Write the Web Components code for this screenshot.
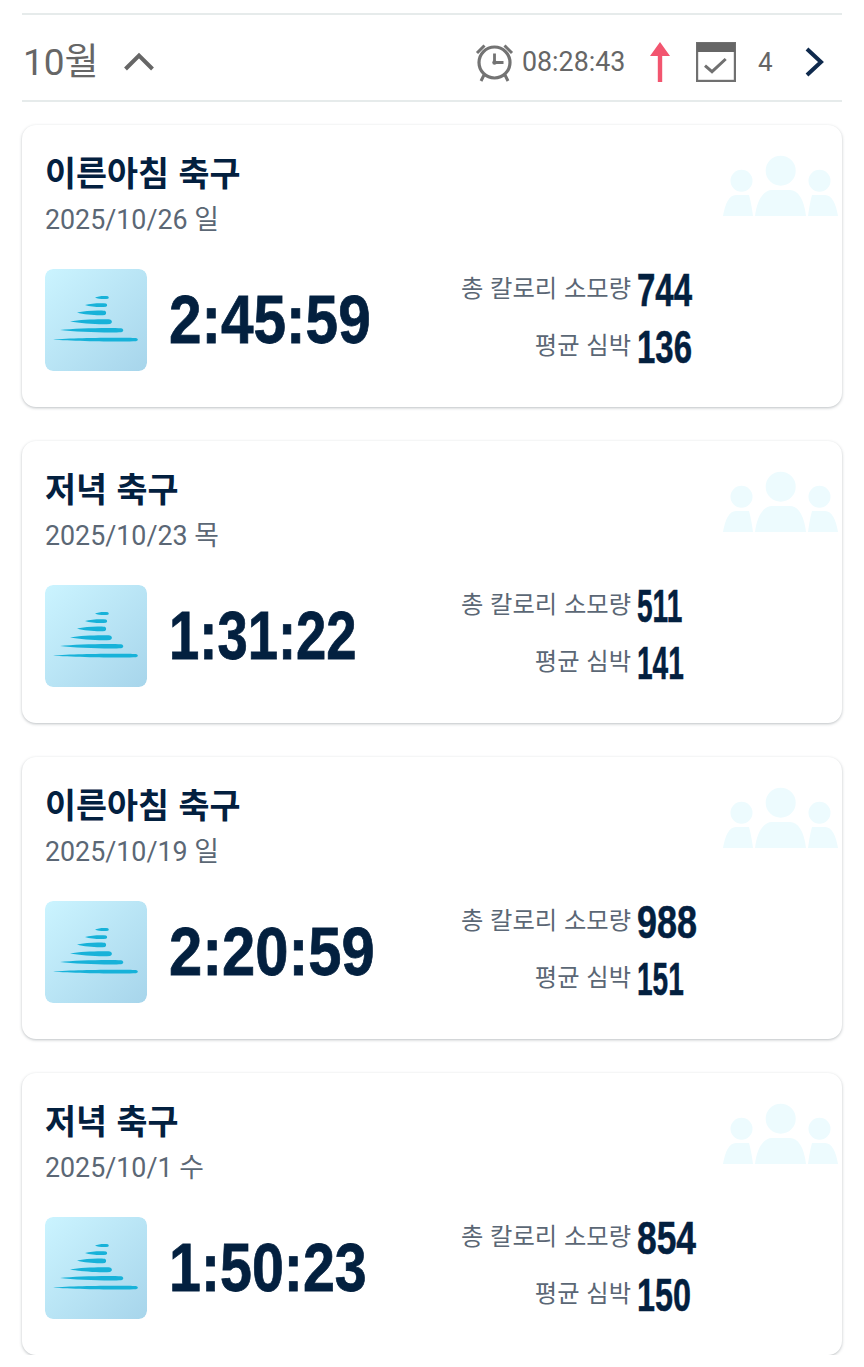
<!DOCTYPE html>
<html lang="ko">
<head>
<meta charset="utf-8">
<title>10월</title>
<style>
    html, body {
        margin: 0;
        background: #ffffff;
    }

    body {
        font-family: Roboto, "Noto Sans CJK KR", sans-serif;
    }
</style>
</head>
<body>
<run-month month="10월" clock="08:28:43" count="4">
    <workout-card title="이른아침 축구" date="2025/10/26 일" time="2:45:59" time-width="201" calories="744" calories-width="54" heart="136" heart-width="54"></workout-card>
    <workout-card title="저녁 축구" date="2025/10/23 목" time="1:31:22" time-width="187" calories="511" calories-width="46" heart="141" heart-width="46"></workout-card>
    <workout-card title="이른아침 축구" date="2025/10/19 일" time="2:20:59" time-width="205" calories="988" calories-width="59" heart="151" heart-width="46"></workout-card>
    <workout-card title="저녁 축구" date="2025/10/1 수" time="1:50:23" time-width="197" calories="854" calories-width="58" heart="150" heart-width="53"></workout-card>
</run-month>

<script>
class RunMonth extends HTMLElement {
    constructor() {
        super();
        this.attachShadow({ mode: 'open' });
        this.shadowRoot.innerHTML = `
            <style>
                :host {
                    display: block;
                    padding: 13px 22px 0 22px;
                    color: #666666;
                }

                header {
                    height: 76px;
                    padding-top: 9px;
                    border-top: 2px solid #e6ebeb;
                    border-bottom: 2px solid #e6ebeb;
                    display: flex;
                    align-items: center;
                }

                .month {
                    font: 400 37px Roboto, "Noto Sans CJK KR", sans-serif;
                    width: 101px;
                    line-height: 1;
                    margin-left: 1px;
                    margin-right: -1px;
                }

                .spacer {
                    flex: 1;
                }

                .clock-time {
                    font: 400 26.800px Roboto, sans-serif;
                    margin-left: 7px;
                    width: 112px;
                }

                .count {
                    font: 400 26px Roboto, sans-serif;
                    margin-left: 22px;
                    width: 16px;
                }

                svg {
                    display: block;
                    flex: none;
                }

                .cards {
                    display: flex;
                    flex-direction: column;
                    gap: 34px;
                    padding-top: 23px;
                }
            </style>
            <header>
                <span class="month"></span>
                <svg width="32" height="22" viewBox="0 0 32 22"><path d="M2.500 18 16 4.500 29.500 18" fill="none" stroke="#666" stroke-width="4"/></svg>
                <span class="spacer"></span>
                <svg width="40" height="40" viewBox="0 0 40 40" fill="none" stroke="#737373">
                    <circle cx="19.500" cy="20.500" r="15.500" stroke-width="3.200"/>
                    <path d="M2 11 9.500 3.500M37 11 29.500 3.500M9 33l-3 6M30 33l3 6" stroke-width="3"/>
                    <path d="M19.500 11.500v9h9" stroke-width="2.800"/>
                    <circle cx="19.500" cy="20.500" r="2.200" fill="#737373" stroke="none"/>
                </svg>
                <span class="clock-time"></span>
                <svg style="margin-left:13px" width="26" height="42" viewBox="0 0 26 42"><path d="M13 1 23 15H15.200V41H10.800V15H3Z" fill="#f2556f"/></svg>
                <svg style="margin-left:23px" width="40" height="40" viewBox="0 0 40 40">
                    <rect x="1" y="1" width="38" height="38" fill="none" stroke="#707070" stroke-width="2.400"/>
                    <rect x="1" y="1" width="38" height="9" fill="#666"/>
                    <path d="M9 23.700l7 6L29.700 17" fill="none" stroke="#707070" stroke-width="3"/>
                </svg>
                <span class="count"></span>
                <svg style="margin:0 18px 0 30px" width="20" height="30" viewBox="0 0 20 30"><path d="M3 2 17 15 3 28" fill="none" stroke="#0f2a4d" stroke-width="4"/></svg>
            </header>
            <div class="cards"><slot></slot></div>
        `;
        this.shadowRoot.querySelector('.month').textContent = this.getAttribute('month');
        this.shadowRoot.querySelector('.clock-time').textContent = this.getAttribute('clock');
        this.shadowRoot.querySelector('.count').textContent = this.getAttribute('count');
    }
}

class WorkoutCard extends HTMLElement {
    constructor() {
        super();
        this.attachShadow({ mode: 'open' });
        this.shadowRoot.innerHTML = `
            <style>
                :host {
                    display: block;
                    position: relative;
                    height: 282px;
                    box-sizing: border-box;
                    padding: 24px 23px 0 23px;
                    border-radius: 14px;
                    background: #ffffff;
                    box-shadow: 0 1px 3px rgba(60,70,80,0.34);
                    color: #03203f;
                }

                .crowd {
                    position: absolute;
                    right: 2px;
                    top: 29px;
                }

                h2 {
                    margin: 0;
                    font: 700 33.700px/46px "Noto Sans CJK KR", sans-serif;
                }

                .date {
                    font: 400 26.800px/36px Roboto, "Noto Sans CJK KR", sans-serif;
                    color: #5b6775;
                    margin-top: 7px;
                }

                .main {
                    display: flex;
                    align-items: center;
                    margin-top: 31px;
                }

                .thumb {
                    flex: none;
                    width: 102px;
                    height: 102px;
                    border-radius: 8px;
                    display: block;
                }

                .time {
                    flex: none;
                    width: 270px;
                    margin-left: 22px;
                    font: 700 69px/102px "Liberation Sans Narrow", "Liberation Sans", sans-serif;
                    -webkit-text-stroke: 0.8px currentColor;
                    transform-origin: left center;
                    white-space: nowrap;
                }

                .stats {
                    display: grid;
                    grid-template-columns: 192px auto;
                    column-gap: 6px;
                    row-gap: 11px;
                    align-items: center;
                    margin-top: -3px;
                }

                .label {
                    font: 400 24.300px/46px "Noto Sans CJK KR", sans-serif;
                    color: #5b6775;
                    text-align: right;
                    white-space: nowrap;
                    position: relative;
                    top: -3px;
                }

                .value {
                    font: 700 46px/46px "Liberation Sans Narrow", "Liberation Sans", sans-serif;
                    -webkit-text-stroke: 0.5px currentColor;
                    transform-origin: left center;
                }
            </style>
            <svg class="crowd" width="118" height="64" viewBox="0 0 118 64" fill="#edfbfe">
                <circle cx="19.500" cy="26.700" r="11"/>
                <circle cx="58.700" cy="16.700" r="15"/>
                <circle cx="97.500" cy="26.700" r="11"/>
                <path d="M1 62C3 50 7 41 14 41H27C29 48 30 55 31 62Z"/>
                <path d="M33 62C35 45 42 36 50 36H68C76 36 82 45 84 62Z"/>
                <path d="M116 62C114 50 110 41 103 41H90C88 48 87 55 86 62Z"/>
            </svg>
            <h2></h2>
            <div class="date"></div>
            <div class="main">
                <svg class="thumb" viewBox="0 0 102 102">
                    <defs>
                        <linearGradient id="bg" x1="0" y1="0" x2="1" y2="1">
                            <stop offset="0" stop-color="#cbf4ff"/>
                            <stop offset="1" stop-color="#a7d5eb"/>
                        </linearGradient>
                    </defs>
                    <rect width="102" height="102" rx="8" fill="url(#bg)"/>
                    <g fill="#17b2d9">
                        <path d="M50 28.500C53 27 59 26.500 63 27.200 64 28 64 29 63 29.800 59 30.500 53 30 50 28.500Z"/>
                        <path d="M40 36C46 34.300 56 33.800 61 34.500 62.500 35.500 62.500 37 61 37.800 56 38.500 46 38 40 36Z"/>
                        <path d="M32 43.500C40 41.500 54 41 60 41.800 61.500 43 61.500 45 60 46 54 46.800 40 45.800 32 43.500Z"/>
                        <path d="M25 52.500C36 50.500 56 50 65 50.500 67.500 51.500 67.500 54 65 55 56 55.800 36 54.500 25 52.500Z"/>
                        <path d="M15 61C30 59 66 58.500 76 59.200 79 60 79 62.500 76 63.200 66 64 30 63 15 61Z"/>
                        <path d="M8 70.500C28 68.800 78 68.300 91 69 93.500 70 93.500 71.500 91 72.300 78 73 28 72.200 8 70.500Z"/>
                    </g>
                </svg>
                <div class="time"></div>
                <div class="stats">
                    <span class="label">총 칼로리 소모량</span><span class="value calories"></span>
                    <span class="label">평균 심박</span><span class="value heart"></span>
                </div>
            </div>
        `;
        this.shadowRoot.querySelector('h2').textContent = this.getAttribute('title');
        this.shadowRoot.querySelector('.date').textContent = this.getAttribute('date');
        this._fit('.time', 'time', 237);
        this._fit('.calories', 'calories', 75.4);
        this._fit('.heart', 'heart', 75.4);
    }

    // no condensed display font here, so squeeze the narrow one to the width in the design
    _fit(selector, name, naturalWidth) {
        const el = this.shadowRoot.querySelector(selector);
        el.textContent = this.getAttribute(name);
        el.style.transform = `scaleX(${this.getAttribute(name + '-width') / naturalWidth})`;
    }
}

customElements.define('run-month', RunMonth);
customElements.define('workout-card', WorkoutCard);
</script>
</body>
</html>
